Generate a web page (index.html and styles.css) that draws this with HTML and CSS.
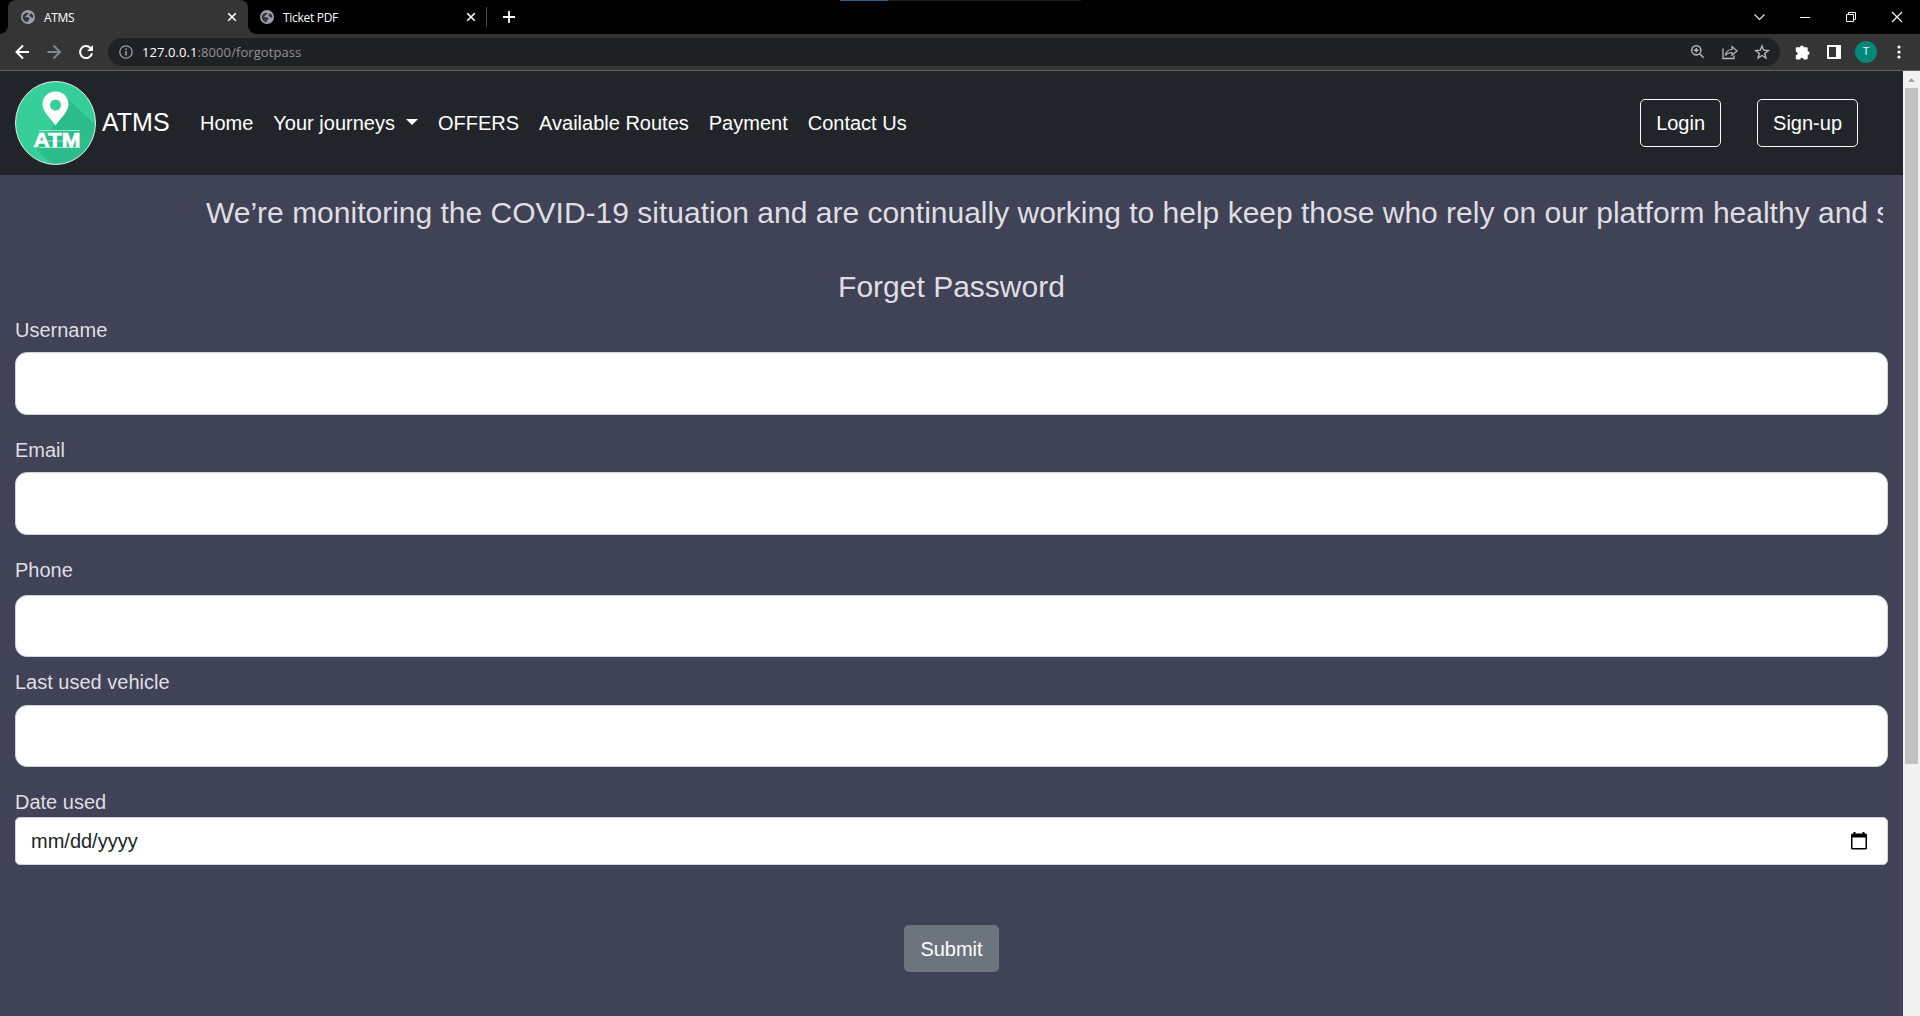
FILE: index.html
```html
<!DOCTYPE html>
<html lang="en">
<head>
<meta charset="utf-8">
<title>ATMS</title>
<link rel="stylesheet" href="styles.css">
</head>
<body>
<svg width="0" height="0" class="defs" aria-hidden="true">
  <symbol id="globe" viewBox="0 0 14 14"><circle cx="7" cy="7" r="7" fill="#9aa0a6"/><path d="M1.800 6.300C2.400 4.300 4 2.900 6 2.800l1.500.2c.3.900-.3 1.300-1 1.500-.9.300-.7 1.200-1.600 1.600l-.9.900 3 .2c1.100.2 1.700 1 1.500 1.800-.3.900-1.500 1-1.600 2l-.2 1.200C4 12.200 1.800 9.800 1.700 7z M9.600 3.100c1.800.8 2.800 2.400 2.700 4.300-.9.600-2 .4-2.400-.4-.3-.8-1.500-.7-1.600-1.600 0-.9 1.400-.9 1.300-2.300z" fill="#36373a"/></symbol>
  <symbol id="close" viewBox="0 0 10 10"><path d="M1.200 1.200l7.600 7.600M8.800 1.200L1.200 8.800" stroke="#fff" stroke-width="1.600"/></symbol>
</svg>

<header class="tabs">
  <div class="tab active"><svg class="fav"><use href="#globe"/></svg><span class="tab-title">ATMS</span><svg class="x"><use href="#close"/></svg></div>
  <div class="tab second"><svg class="fav"><use href="#globe"/></svg><span class="tab-title">Ticket PDF</span><svg class="x"><use href="#close"/></svg></div>
  <i class="tab-sep"></i>
  <svg class="plus" width="12" height="12"><path d="M6 0v12M0 6h12" stroke="#fff" stroke-width="1.800"/></svg>
  <div class="progress"><i></i></div>
  <svg class="window-controls" width="142" height="14" fill="none" stroke="#fff">
    <path d="M.5 4.500l5 5 5-5" stroke="#e8e8e8" stroke-width="1.200"/>
    <path d="M46 7.500h10"/>
    <path d="M92.500 4.500h7v7h-7zM94.500 4.500v-2h7v7h-2"/>
    <path d="M138 2l10 10M148 2l-10 10" stroke-width="1.200"/>
  </svg>
</header>

<div class="toolbar">
  <svg class="nav-icons" width="80" height="16" fill="none" stroke-width="2">
    <path d="M15 8H3M9 1.500L2.500 8 9 14.500" stroke="#fff"/>
    <path d="M33.500 8h12M39.500 1.500L46 8l-6.500 6.500" stroke="#86878a"/>
    <path d="M76.500 4A6 6 0 1 0 78 9.200" stroke="#fff"/><path d="M79 1v6h-6z" fill="#fff"/>
  </svg>
  <div class="omnibox">
    <svg width="14" height="14" fill="none" stroke="#9aa0a6" stroke-width="1.300"><circle cx="7" cy="7" r="6.200"/><path d="M7 6v4.500M7 3.500v1.600" stroke-width="1.600"/></svg>
    <span class="url"><b>127.0.0.1</b>:8000/forgotpass</span>
    <svg class="omni-icons" width="80" height="16" fill="none" stroke="#b4b7ba" stroke-width="1.500">
      <circle cx="6.300" cy="6.300" r="4.600"/><path d="M9.700 9.700l4 4M4 6.300h4.600M6.300 4v4.600"/>
      <path d="M33 4.500v10h11v-3" stroke-width="1.300"/><path d="M35.500 11.500c.5-4 2.900-6 6.500-6V2.500l5 4.500-5 4.200V8.500c-2.900 0-5 .8-6.500 3z" stroke-width="1.200"/>
      <path d="M72 1.900l1.700 4.300 4.600.3-3.500 3 1.100 4.500L72 11.500 68.100 14l1.100-4.500-3.500-3 4.600-.3z" stroke-width="1.400"/>
    </svg>
  </div>
  <svg class="puzzle" width="15" height="15" viewBox="0 0 15 15" fill="#fff"><path d="M5 2.300a1.900 1.900 0 0 1 3.800 0h2.700c.7 0 1.200.5 1.200 1.200v2.700a1.900 1.900 0 0 1 0 3.800v3.300c0 .7-.5 1.200-1.200 1.200H8.600a1.700 1.700 0 0 0-3.400 0H2c-.7 0-1.200-.5-1.200-1.200v-3a1.800 1.800 0 0 0 0-3.600V3.500c0-.7.5-1.200 1.200-1.200z"/></svg>
  <svg class="panel" width="14" height="14"><path d="M0 0h14v14H0zM2 2v10h7V2z" fill="#fff" fill-rule="evenodd"/></svg>
  <span class="avatar">T</span>
  <svg class="dots" width="4" height="14" fill="#fff"><circle cx="2" cy="2" r="1.600"/><circle cx="2" cy="7" r="1.600"/><circle cx="2" cy="12" r="1.600"/></svg>
</div>

<div class="viewport">
  <div class="page">
    <nav class="navbar">
      <svg class="logo" viewBox="0 0 81 84">
        <defs><clipPath id="disc"><ellipse cx="40.500" cy="42" rx="40" ry="41.500"/></clipPath></defs>
        <g clip-path="url(#disc)">
          <path d="M0 0h81v84H0z" fill="#36cf9a"/>
          <path d="M50 15l40 38v40H45L20 66l20-22z" fill="#2dbd8c"/>
        </g>
        <ellipse cx="40.500" cy="42" rx="40" ry="41.500" fill="none" stroke="#e5eeea"/>
        <path d="M40.500 10.500c-7.500 0-13 5.500-13 12.500 0 8 8 14 13 21.500 5-7.500 13-13.500 13-21.500 0-7-5.500-12.500-13-12.500zm0 8a5.500 5.500 0 1 1 0 11 5.500 5.500 0 0 1 0-11z" fill="#fff" fill-rule="evenodd"/>
        <path d="M24 49.500h41M24 66.500h41M22 60h42" stroke="#b9eedb" stroke-width=".8"/>
        <text x="18.500" y="65.500" textLength="47" lengthAdjust="spacingAndGlyphs">ATM</text>
      </svg>
      <span class="brand">ATMS</span>
      <div class="links">
        <a>Home</a><a class="drop">Your journeys</a><a>OFFERS</a><a>Available Routes</a><a>Payment</a><a>Contact Us</a>
      </div>
      <div class="account"><button class="outline">Login</button><button class="outline">Sign-up</button></div>
    </nav>
    <div class="notice"><span>We’re monitoring the COVID-19 situation and are continually working to help keep those who rely on our platform healthy and safe.</span></div>
    <form class="form">
      <h1>Forget Password</h1>
      <label for="username">Username</label>
      <input id="username" type="text">
      <label for="email">Email</label>
      <input id="email" type="text">
      <label for="phone">Phone</label>
      <input id="phone" type="text">
      <label for="vehicle">Last used vehicle</label>
      <input id="vehicle" type="text">
      <label>Date used</label>
      <div class="date"><span>mm/dd/yyyy</span>
        <svg width="16" height="18"><path d="M3.500 0v3M12.500 0v3" stroke="#000" stroke-width="2"/><path d="M1.500 1.500h13q1.500 0 1.500 1.500v13q0 1.500-1.500 1.500h-13Q0 17.500 0 16V3q0-1.500 1.500-1.500zM1.500 5.500V16h13V5.500z" fill-rule="evenodd"/></svg>
      </div>
      <button type="button" class="submit">Submit</button>
    </form>
  </div>
  <div class="scrollbar"><i class="up"></i><i class="thumb"></i></div>
</div>
</body>
</html>
```
FILE: styles.css
```css
* { box-sizing: border-box; }
body {
  margin: 0;
  height: 1016px;
  overflow: hidden;
  display: flex;
  flex-direction: column;
  font-family: "Liberation Sans", Arial, sans-serif;
  background: #404256;
}
svg { flex: none; overflow: visible; }
.defs { position: absolute; }

/* Browser frame */
.tabs {
  position: relative;
  flex: none;
  height: 34px;
  padding-left: 8px;
  display: flex;
  align-items: center;
  background: #000;
  color: #fff;
  font: 12px "Open Sans", sans-serif;
}
.tab { width: 240px; height: 34px; padding: 0 11px 0 13px; display: flex; align-items: center; position: relative; }
.active { background: #353535; border-radius: 8px 8px 0 0; }
.active::before, .active::after { content: ""; position: absolute; bottom: 0; width: 8px; height: 8px; }
.active::before { left: -8px; background: radial-gradient(circle at 0 0, #000 7.5px, #353535 8px); }
.active::after { right: -8px; background: radial-gradient(circle at 100% 0, #000 7.5px, #353535 8px); }
.second { width: 238px; padding-left: 12px; padding-right: 10px; }
.fav { width: 14px; height: 14px; }
.tab-title { flex: 1; margin-left: 9px; letter-spacing: -.3px; }
.x { width: 10px; height: 10px; }
.tab-sep { width: 1px; height: 20px; background: #4a4a4a; }
.plus { margin-left: 16px; }
.progress { position: absolute; top: 0; left: 840px; width: 241px; height: 1px; background: #1c1f1f; }
.progress i { display: block; width: 48px; height: 1px; background: #226297; }
.window-controls { margin-left: auto; margin-right: 24px; }

.toolbar {
  flex: none;
  height: 37px;
  padding: 4px 19px 4px 14px;
  display: flex;
  align-items: center;
  background: #353535;
  border-bottom: 1px solid #626262;
}
.omnibox {
  flex: none;
  width: 1672px;
  height: 28px;
  margin-left: 14px;
  padding: 0 10px 0 11px;
  border-radius: 14px;
  display: flex;
  align-items: center;
  background: #202124;
}
.url { margin-left: 9px; color: #909294; font: 13px "Open Sans", sans-serif; letter-spacing: .08px; }
.url b { color: #fff; font-weight: 400; }
.omni-icons { margin-left: auto; }
.puzzle { margin-left: 15px; }
.panel { margin-left: 17px; }
.avatar { width: 22px; height: 22px; margin-left: 14px; border-radius: 50%; background: #00897b; color: #e7f4f2; font: 11px/22px Roboto, sans-serif; text-align: center; }
.dots { margin-left: auto; }

/* Page */
.viewport { flex: 1; min-height: 0; display: flex; }
.page { flex: 1; min-width: 0; font-size: 20px; line-height: 30px; }
.navbar { height: 104px; padding: 10px 15px; display: flex; align-items: center; background: #212529; color: #fff; }
.logo { width: 81px; height: 84px; }
.logo text { font: bold 21px "Liberation Sans", sans-serif; fill: #fff; stroke: #fff; stroke-width: .6; }
.brand { margin: 0 1px 2px 6px; font-size: 25px; width: 87px; }
.links { display: flex; }
.links a { padding: 0 10px; white-space: nowrap; }
.drop::after { content: ""; display: inline-block; margin-left: 11px; vertical-align: 5px; border: 6px solid transparent; border-top-color: #fff; border-bottom: 0; }
.account { margin-left: auto; margin-right: 30px; display: flex; gap: 36px; }
button { font: inherit; color: #fff; border-radius: 5px; }
.outline { height: 48px; padding: 0 15px; border: 1px solid #f8f9fa; background: none; }
.notice { height: 45px; margin: 15px 20px 0; padding-left: 186px; overflow: hidden; white-space: nowrap; font-size: 30px; line-height: 45px; color: #dfdfe3; }
.form { margin-top: 34px; padding: 0 15px; display: flex; flex-direction: column; color: #dfdfe3; }
h1 { margin: 0 0 10px; font-size: 30px; line-height: 36px; font-weight: 400; text-align: center; }
input { height: 63px; margin: 7px 0 20px; border: 1px solid #ced4da; border-radius: 12px; background: #fff; padding: 0 16px; font: inherit; }
#phone { height: 62px; margin: 10px 0; }
#vehicle { height: 62px; margin-top: 8px; }
.date { height: 48px; padding: 0 20px 0 15px; border: 1px solid #ced4da; border-radius: 5px; display: flex; align-items: center; justify-content: space-between; background: #fff; color: #212529; }
.submit { align-self: center; width: 95px; height: 47px; margin-top: 60px; padding: 0; border: 0; background: #6c757d; }

.scrollbar { width: 17px; padding: 0 2px; background: #f1f1f1; }
.up { display: block; width: 7px; height: 17px; margin: 0 3px; background: #a3a3a3; clip-path: polygon(0 11px, 3.5px 7px, 7px 11px); }
.thumb { display: block; height: 676px; background: #c1c1c1; }
```
